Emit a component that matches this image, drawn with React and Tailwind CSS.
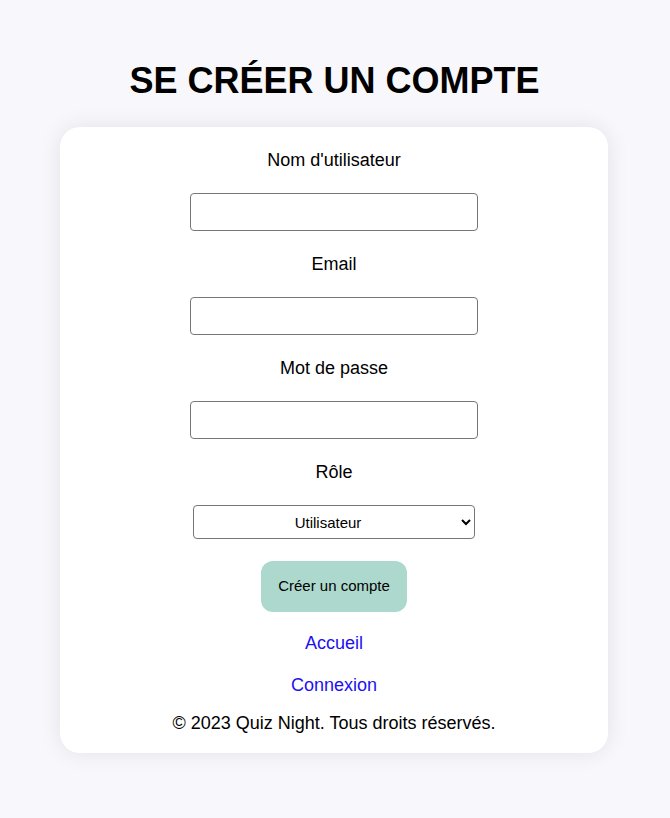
export default function App() {
  const fields = [
    { label: "Nom d'utilisateur", type: 'text' },
    { label: 'Email', type: 'email' },
    { label: 'Mot de passe', type: 'password' },
  ]

  return (
    <div className="min-h-[818px] bg-[#f8f8fc] pt-[61px] font-['Liberation_Sans',Arial,sans-serif] text-black">
      <h1 className="text-center text-[36px] font-bold leading-[40px] mb-[26px] -ml-px">SE CRÉER UN COMPTE</h1>

      <div className="ml-[60px] w-[548px] bg-white rounded-[20px] shadow-[0_0_22px_rgba(0,0,0,0.09)] pt-[23px] pb-[19px] flex flex-col items-center">
        {fields.map(f => (
          <div key={f.label} className="flex flex-col items-center mb-[23px]">
            <label className="text-[18px] leading-[21px] mb-[22px]">{f.label}</label>
            <input type={f.type} className="w-[288px] h-[38px] border border-[#767676] rounded-[4px] bg-white px-2" />
          </div>
        ))}

        <label className="text-[18px] leading-[21px] mb-[22px]">Rôle</label>
        <select className="w-[282px] h-[34px] border border-[#767676] rounded-[4px] bg-white text-[15px] [text-align-last:center] mb-[22px]">
          <option>Utilisateur</option>
          <option>Administrateur</option>
        </select>

        <button className="w-[146px] h-[51px] rounded-[12px] bg-[#acd8cd] text-[15px] mb-[21px]">Créer un compte</button>

        <a href="#" className="text-[18px] leading-[21px] text-[#2010f0] mb-[21px]">Accueil</a>
        <a href="#" className="text-[18px] leading-[21px] text-[#2010f0] mb-[17px]">Connexion</a>

        <p className="text-[18px] leading-[21px]">© 2023 Quiz Night. Tous droits réservés.</p>
      </div>
    </div>
  )
}
